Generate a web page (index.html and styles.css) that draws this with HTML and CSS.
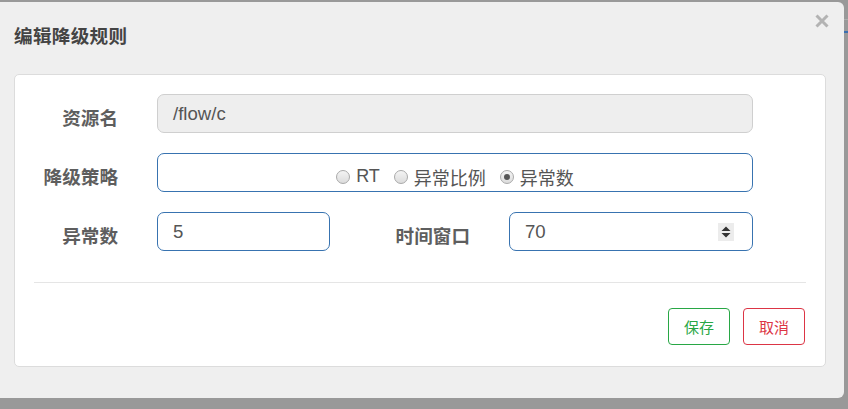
FILE: index.html
```html
<!DOCTYPE html>
<html lang="zh">
<head>
<meta charset="utf-8">
<title>编辑降级规则</title>
<link rel="stylesheet" href="styles.css">
</head>
<body>
<div class="backdrop">
  <div class="dialog">
    <div class="dialog-header">
      <div class="dialog-title">编辑降级规则</div>
      <div class="close">
        <svg width="14" height="14" viewBox="0 0 14 14"><path d="M1.5 1.5 L12.5 12.5 M12.5 1.5 L1.5 12.5" stroke="#b3b3b3" stroke-width="3" stroke-linecap="butt"/></svg>
      </div>
    </div>
    <div class="card">
      <div class="form-row">
        <div class="label">资源名</div>
        <div class="field field-full field-disabled">/flow/c</div>
      </div>
      <div class="form-row">
        <div class="label">降级策略</div>
        <div class="field field-full field-active radios">
          <span class="radio-item"><span class="radio"></span>RT</span>
          <span class="radio-item"><span class="radio"></span>异常比例</span>
          <span class="radio-item"><span class="radio checked"></span>异常数</span>
        </div>
      </div>
      <div class="form-row">
        <div class="label">异常数</div>
        <div class="field field-active field-small">5</div>
        <div class="label label-wide">时间窗口</div>
        <div class="field field-active field-medium">
          <span>70</span>
          <span class="spinner">
            <svg width="16" height="18" viewBox="0 0 16 18"><path d="M3.5 8 L8 3.5 L12.5 8 Z M3.5 10 L8 14.5 L12.5 10 Z" fill="#333"/></svg>
          </span>
        </div>
      </div>
      <div class="divider"></div>
      <div class="actions">
        <button class="btn btn-save">保存</button>
        <button class="btn btn-cancel">取消</button>
      </div>
    </div>
  </div>
  <div class="behind">
    <div class="behind-line light"></div>
    <div class="behind-line blue"></div>
  </div>
</div>
</body>
</html>
```

FILE: styles.css
```css
html, body {
  margin: 0;
  padding: 0;
}
body {
  background: #999999;
  width: 848px;
  height: 409px;
  overflow: hidden;
  font-family: "Liberation Sans", Arial, "Noto Sans CJK SC", sans-serif;
}
.backdrop {
  display: flex;
  align-items: flex-start;
}
.dialog {
  margin-top: 2px;
  width: 844px;
  height: 396px;
  flex: none;
  background: #efefef;
  border-radius: 0 6px 6px 0;
}
.dialog-header {
  display: flex;
  justify-content: space-between;
  align-items: flex-start;
  height: 72px;
  padding: 0 15px 0 14px;
}
.dialog-title {
  margin-top: 22px;
  font-size: 18.6px;
  line-height: 22px;
  font-weight: bold;
  color: #444;
  font-family: "Noto Sans CJK SC", sans-serif;
  letter-spacing: 0.3px;
}
.close {
  margin-top: 12px;
  width: 14px;
  height: 14px;
  display: flex;
}
.card {
  margin-left: 14px;
  width: 810px;
  height: 272px;
  background: #fff;
  border: 1px solid #dcdcdc;
  border-radius: 5px;
  padding-top: 19px;
  box-sizing: content-box;
}
.form-row {
  display: flex;
  align-items: center;
  height: 39px;
  margin-bottom: 20px;
}
.form-row:nth-child(3) {
  margin-bottom: 0;
}
.label {
  width: 103px;
  text-align: right;
  font-family: "Noto Sans CJK SC", sans-serif;
  font-weight: bold;
  font-size: 18.6px;
  color: #5e5e5e;
  margin-right: 39px;
  padding-top: 5px;
  flex: none;
}
.label-wide {
  width: 140px;
}
.field {
  box-sizing: border-box;
  height: 39px;
  border-radius: 7px;
  border: 1px solid #ccc;
  padding: 0 15px;
  display: flex;
  align-items: center;
  font-size: 18.6px;
  color: #555;
  flex: none;
}
.field-full {
  width: 596px;
}
.field-small {
  width: 173px;
}
.field-medium {
  width: 244px;
  justify-content: space-between;
  padding-right: 18px;
}
.field-disabled {
  background: #eeeeee;
  border-color: #cfcfcf;
}
.field-active {
  border-color: #3873b0;
}
.radios {
  justify-content: center;
  padding-top: 8px;
  font-family: "Liberation Sans", Arial, "Noto Sans CJK SC", sans-serif;
  font-size: 18px;
}
.radio-item {
  display: inline-flex;
  align-items: center;
  margin: 0 7px;
}
.radio {
  width: 12px;
  height: 12px;
  border-radius: 50%;
  border: 1px solid #a9a9a9;
  background: linear-gradient(#f4f4f4, #dcdcdc);
  margin-right: 6px;
  position: relative;
  box-sizing: content-box;
}
.radio.checked::after {
  content: "";
  position: absolute;
  left: 3px;
  top: 3px;
  width: 6px;
  height: 6px;
  border-radius: 50%;
  background: #555;
}
.spinner {
  width: 16px;
  height: 18px;
  background: #ececec;
  display: flex;
}
.divider {
  height: 1px;
  background: #e5e5e5;
  margin: 31px 19px 0 19px;
}
.actions {
  display: flex;
  justify-content: flex-end;
  gap: 13px;
  margin-top: 25px;
  padding-right: 20px;
}
.btn {
  width: 62px;
  height: 37px;
  background: #fff;
  border-radius: 4px;
  font-family: "Noto Sans CJK SC", sans-serif;
  font-size: 15px;
  padding: 0;
  cursor: pointer;
}
.btn-save {
  border: 1px solid #28a745;
  color: #28a745;
}
.btn-cancel {
  border: 1px solid #dc3545;
  color: #dc3545;
}
.behind {
  flex: 1;
  display: flex;
  flex-direction: column;
}
.behind-line {
  height: 1px;
}
.behind-line.light {
  margin-top: 19px;
  background: #adadad;
}
.behind-line.blue {
  margin-top: 11px;
  height: 2px;
  background: #3c6fb0;
}
```
